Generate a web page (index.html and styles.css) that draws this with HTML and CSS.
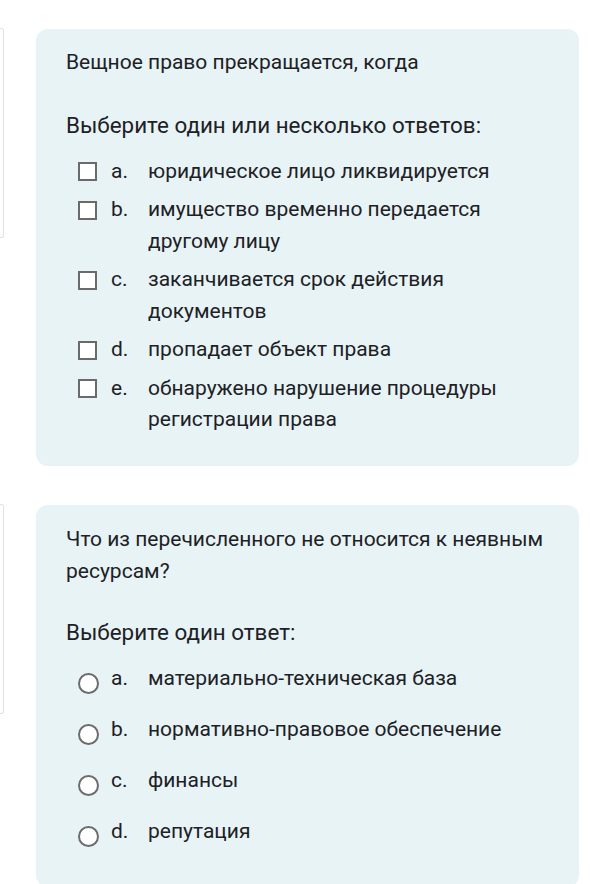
FILE: index.html
```html
<!DOCTYPE html>
<html lang="ru">

<head>
    <meta charset="UTF-8">
    <meta name="viewport" content="width=device-width, initial-scale=1.0">
    <link rel="stylesheet" href="styles.css">
    <title>Тест</title>
</head>

<body>
    <div class="que">
        <div class="info"></div>
        <div class="formulation">
            <div class="qtext">Вещное право прекращается, когда</div>
            <div class="prompt">Выберите один или несколько ответов:</div>
            <div class="answer">
                <div class="option">
                    <span class="box"></span>
                    <span class="letter">a.</span>
                    <span class="label">юридическое лицо ликвидируется</span>
                </div>
                <div class="option">
                    <span class="box"></span>
                    <span class="letter">b.</span>
                    <span class="label">имущество временно передается другому лицу</span>
                </div>
                <div class="option">
                    <span class="box"></span>
                    <span class="letter">c.</span>
                    <span class="label">заканчивается срок действия документов</span>
                </div>
                <div class="option">
                    <span class="box"></span>
                    <span class="letter">d.</span>
                    <span class="label">пропадает объект права</span>
                </div>
                <div class="option">
                    <span class="box"></span>
                    <span class="letter">e.</span>
                    <span class="label">обнаружено нарушение процедуры регистрации права</span>
                </div>
            </div>
        </div>
    </div>

    <div class="que">
        <div class="info"></div>
        <div class="formulation last">
            <div class="qtext">Что из перечисленного не относится к неявным ресурсам?</div>
            <div class="prompt">Выберите один ответ:</div>
            <div class="answer radios">
                <div class="option">
                    <span class="circle"></span>
                    <span class="letter">a.</span>
                    <span class="label">материально-техническая база</span>
                </div>
                <div class="option">
                    <span class="circle"></span>
                    <span class="letter">b.</span>
                    <span class="label">нормативно-правовое обеспечение</span>
                </div>
                <div class="option">
                    <span class="circle"></span>
                    <span class="letter">c.</span>
                    <span class="label">финансы</span>
                </div>
                <div class="option">
                    <span class="circle"></span>
                    <span class="letter">d.</span>
                    <span class="label">репутация</span>
                </div>
            </div>
        </div>
    </div>
</body>

</html>
```

FILE: styles.css
```css
body {
    margin: 0;
    font-family: Roboto, "Noto Sans", sans-serif;
    color: #1d2125;
    background: #fff;
}

.que {
    display: flex;
    align-items: flex-start;
    margin-top: 29px;
}

.que + .que {
    margin-top: 39px;
}

.info {
    width: 3px;
    height: 208px;
    margin-top: -1px;
    border: 1px solid #dee2e6;
    border-left: none;
    border-radius: 0 3px 3px 0;
    background: #fff;
    flex-shrink: 0;
}

.formulation {
    background-color: #e7f3f5;
    border-radius: 12px;
    margin-left: 32px;
    width: 543px;
    box-sizing: border-box;
    padding: 18px 20px 30px 30px;
    font-size: 21px;
    line-height: 31.5px;
}

.formulation.last {
    padding-bottom: 40px;
}

.last .qtext {
    line-height: 32px;
}

.prompt {
    font-size: 22.4px;
    line-height: 27px;
    margin-top: 33px;
    margin-bottom: 17px;
}

.last .prompt {
    margin-top: 32px;
}

.answer {
    display: flex;
    flex-direction: column;
    gap: 7px;
}

.answer.radios {
    gap: 19.5px;
}

.option {
    display: flex;
    align-items: flex-start;
}

.box {
    width: 15px;
    height: 15px;
    border: 2px solid #6a6a6a;
    background: #fff;
    margin: 6.5px 0 0 12px;
    flex-shrink: 0;
}

.circle {
    width: 17px;
    height: 17px;
    border: 2px solid #6c6c6c;
    border-radius: 50%;
    background: #fff;
    margin: 10px 0 0 12px;
    flex-shrink: 0;
}

.letter {
    width: 37px;
    margin-left: 14px;
    flex-shrink: 0;
}

.circle + .letter {
    margin-left: 12px;
}

.label {
    flex: 1;
}
```
